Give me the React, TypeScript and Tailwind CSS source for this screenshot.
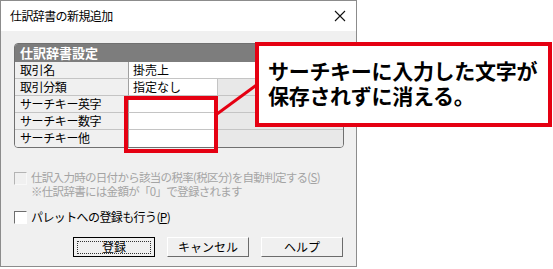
import React from "react";

const jp = { fontFamily: '"Noto Sans CJK JP", "Noto Sans", sans-serif' };

function Row({ label, value, wide, last }: { label: string; value?: string; wide?: boolean; last?: boolean }) {
  return (
    <div className="flex h-[17px]">
      <div className={`w-[114px] shrink-0 bg-[#f0f0f0] border-r border-[#a0a0a0] ${last ? "" : "border-b border-b-[#c4c4c4]"} pl-[5px] text-[12px] leading-[16px] text-black tracking-[-0.4px]`}>
        {label}
      </div>
      {wide ? (
        <div className={`flex-1 bg-white ${last ? "" : "border-b border-b-[#c4c4c4]"} pl-[4px] text-[12px] leading-[16px] text-black`}>{value}</div>
      ) : (
        <>
          <div className={`w-[89px] shrink-0 bg-white border-r border-[#c4c4c4] ${last ? "" : "border-b border-b-[#c4c4c4]"} pl-[4px] text-[12px] leading-[16px] text-black`}>
            {value}
          </div>
          <div className={`flex-1 bg-[#e8e8e8] ${last ? "" : "border-b border-b-[#c4c4c4]"}`} />
        </>
      )}
    </div>
  );
}

function Checkbox({ disabled }: { disabled?: boolean }) {
  return (
    <div
      className={`w-[13px] h-[13px] shrink-0 border ${
        disabled
          ? "border-t-[#b4b4b4] border-l-[#b4b4b4] border-b-[#f8f8f8] border-r-[#f8f8f8] bg-[#f0f0f0]"
          : "border-t-[#6e6e6e] border-l-[#6e6e6e] border-b-[#ffffff] border-r-[#ffffff] bg-white"
      }`}
    />
  );
}

function Button({ children, def }: { children: React.ReactNode; def?: boolean }) {
  return (
    <div
      className={`w-[82px] h-[20px] flex items-center justify-center bg-[#f0f0f0] text-[12px] text-black ${
        def
          ? "border border-[#000]"
          : "border border-t-white border-l-white border-b-[#6b6b6b] border-r-[#6b6b6b]"
      }`}
    >
      {def ? (
        <div className="w-[74px] h-[13px] border border-dotted border-[#333] flex items-center justify-center leading-none">
          {children}
        </div>
      ) : (
        children
      )}
    </div>
  );
}

export default function App() {
  return (
    <div className="relative w-[553px] h-[269px] bg-white overflow-hidden" style={jp}>
      <div className="w-[357px] h-[267px] border border-[#8c8c8c] bg-[#f0f0f0] flex flex-col">
        <div className="h-[30px] bg-white flex items-center justify-between pl-[9px] pr-[8px]">
          <span className="text-[12px] text-black tracking-[-0.6px]">仕訳辞書の新規追加</span>
          <svg width="12" height="12" viewBox="0 0 12 12" className="mr-[2px]">
            <path d="M1 1 L11 11 M11 1 L1 11" stroke="#111" strokeWidth="1.1" />
          </svg>
        </div>
        <div className="flex flex-col pl-[13px] pr-[12px] pt-[12px]">
          <div className="w-[330px] rounded-[4px] border border-[#707070] overflow-hidden">
            <div className="h-[18px] bg-[#7d7d7d] pl-[5px] text-[13px] leading-[18px] font-bold text-white">仕訳辞書設定</div>
            <Row label="取引名" value="掛売上" wide />
            <Row label="取引分類" value="指定なし" />
            <Row label="サーチキー英字" />
            <Row label="サーチキー数字" />
            <Row label="サーチキー他" last />
          </div>
          <div className="mt-[23px] flex items-start gap-[4px]">
            <div className="mt-[1px]">
              <Checkbox disabled />
            </div>
            <div className="text-[11.5px] leading-[13.5px] text-[#a4a4a4] tracking-[-0.7px] whitespace-nowrap">
              <div>仕訳入力時の日付から該当の税率(税区分)を自動判定する(<span className="underline">S</span>)</div>
              <div>※仕訳辞書には金額が「0」で登録されます</div>
            </div>
          </div>
          <div className="mt-[12px] flex items-center gap-[4px]">
            <Checkbox />
            <span className="text-[12px] leading-[14px] text-black tracking-[-0.6px] whitespace-nowrap">
              パレットへの登録も行う(<span className="underline">P</span>)
            </span>
          </div>
          <div className="mt-[13px] flex gap-[12px] pl-[59px]">
            <Button def>登録</Button>
            <Button>キャンセル</Button>
            <Button>ヘルプ</Button>
          </div>
        </div>
      </div>

      {/* annotation overlays */}
      <div className="absolute left-[124px] top-[96px] w-[94px] h-[57px] border-4 border-[#e50012]" />
      <svg className="absolute left-0 top-0" width="553" height="269">
        <line x1="217" y1="114" x2="258" y2="84" stroke="#e50012" strokeWidth="3" />
      </svg>
      <div className="absolute left-[255px] top-[42px] w-[297px] h-[85px] border-4 border-[#e50012] bg-white pl-[9px] pt-[12px]">
        <div className="text-[21px] leading-[25px] font-bold text-black tracking-[-0.3px] whitespace-nowrap">サーチキーに入力した文字が</div>
        <div className="text-[21px] leading-[25px] font-bold text-black tracking-[-0.3px] whitespace-nowrap">保存されずに消える。</div>
      </div>
    </div>
  );
}
